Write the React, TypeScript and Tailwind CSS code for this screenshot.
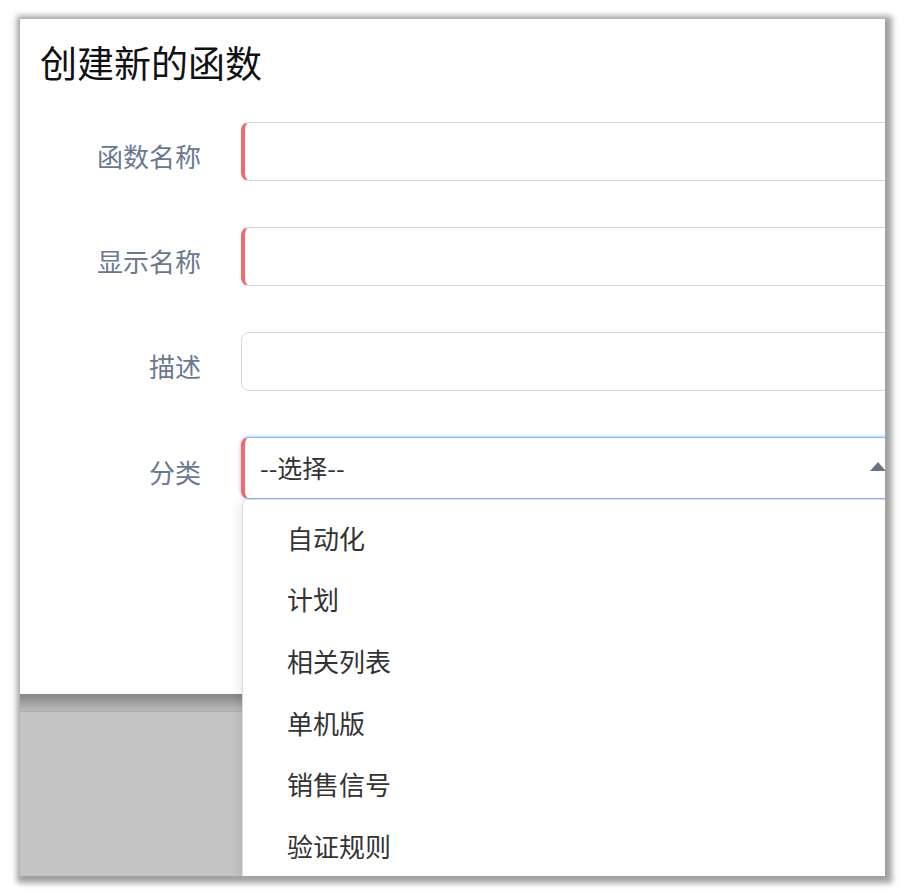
import { ReactNode } from 'react';

const cjk = { fontFamily: '"Microsoft YaHei", "Noto Sans CJK SC", "Noto Sans", sans-serif' };

const options = ['自动化', '计划', '相关列表', '单机版', '销售信号', '验证规则'];

function Row({ label, children }: { label: string; children: ReactNode }) {
  return (
    <div className="flex items-center">
      <div className="mt-[8px] w-[221px] shrink-0 pr-[40px] text-right text-[26px] leading-none text-[#6a7890]">
        {label}
      </div>
      {children}
    </div>
  );
}

function TextInput({ required }: { required?: boolean }) {
  return (
    <div
      className={
        'h-[59px] w-[700px] shrink-0 rounded-[8px] border border-[#d3d6db] bg-white ' +
        (required ? 'border-l-[4px] border-l-[#f06b6b]' : '')
      }
    />
  );
}

export default function App() {
  return (
    <div className="h-[895px] w-[905px] bg-white pl-[20px] pt-[19px]" style={cjk}>
      <div className="relative h-[857px] w-[865px] overflow-hidden bg-[#c4c4c4] shadow-[2px_2px_6px_5px_rgba(0,0,0,0.38)]">
        <div className="h-[675px] bg-white pt-[25px]">
          <h1 className="pl-[20px] text-[37px] font-normal leading-none text-[#111]">创建新的函数</h1>
          <div className="mt-[41px] flex flex-col gap-[46px]">
            <Row label="函数名称">
              <TextInput required />
            </Row>
            <Row label="显示名称">
              <TextInput required />
            </Row>
            <Row label="描述">
              <TextInput />
            </Row>
            <Row label="分类">
              <div className="flex h-[62px] w-[700px] shrink-0 items-center rounded-[8px] border border-[#86b7f5] border-l-[4px] border-l-[#f06b6b] bg-white pl-[15px] shadow-[0_0_3px_1px_rgba(96,165,250,0.45)]">
                <span className="w-[610px] shrink-0 text-[25px] text-[#333]">--选择--</span>
                <svg width="16" height="9" viewBox="0 0 16 9" className="mt-[-4px]">
                  <path d="M0 9 L8 0 L16 9 Z" fill="#6b7280" />
                </svg>
              </div>
            </Row>
          </div>
        </div>
        <div className="h-[17px] bg-gradient-to-b from-[#858585] to-[#bcbcbc]" />
        <div className="h-px bg-[#a4acb4]" />

        <div className="absolute left-[222px] top-[480px] h-[400px] w-[700px] rounded-tl-[6px] border-l border-t border-[#dcdcdc] bg-white pt-[7px] shadow-[-4px_2px_10px_rgba(0,0,0,0.07)]">
          {options.map((o) => (
            <div key={o} className="flex h-[61.6px] items-center pl-[44px] text-[26px] leading-none text-[#333]">
              {o}
            </div>
          ))}
        </div>
      </div>
    </div>
  );
}
